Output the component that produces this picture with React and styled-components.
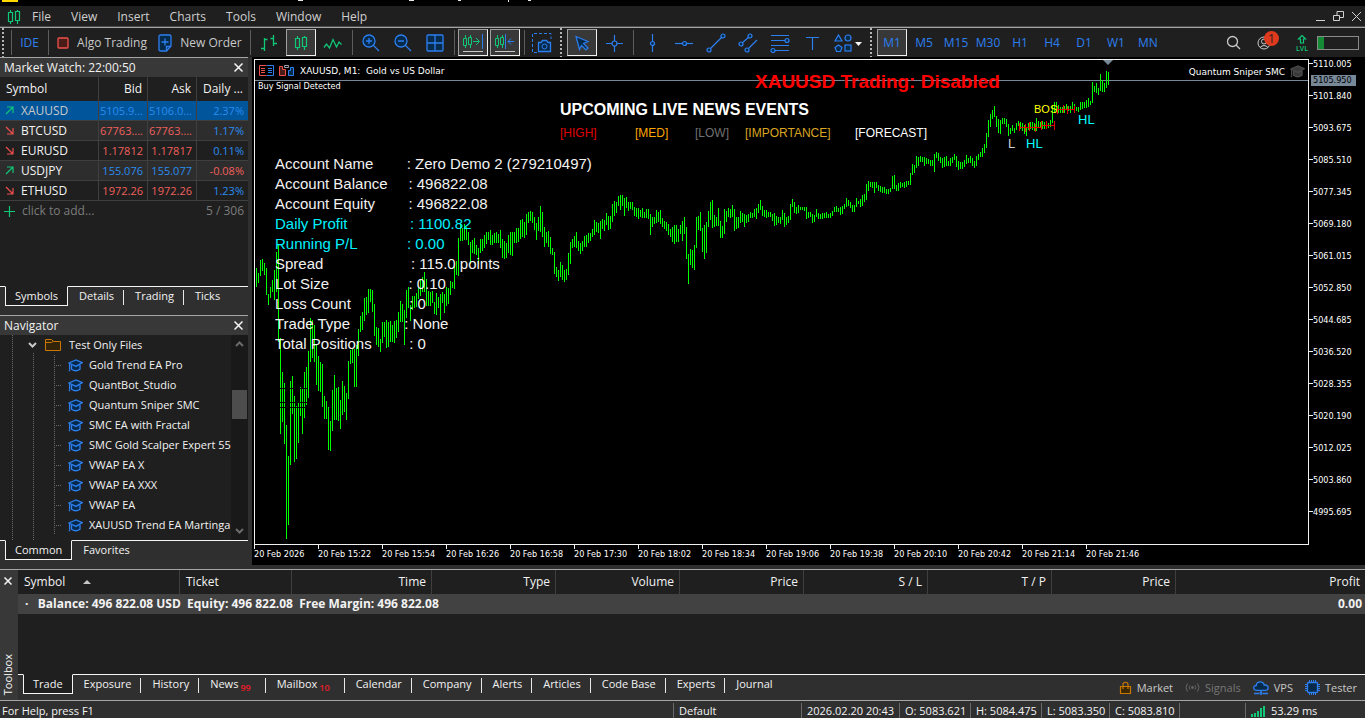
import React from 'react';
import styled, { createGlobalStyle, css } from 'styled-components';

const GlobalStyle = createGlobalStyle`
  * {
    box-sizing: border-box;
  }

  body {
    margin: 0;
    background: #2f2f2f;
    color: #f2f2f2;
    font-family: 'Open Sans', 'Noto Sans', sans-serif;
    font-size: 12px;
    line-height: 16px;
  }

  button {
    font: inherit;
    color: inherit;
    background: none;
    border: 0;
    padding: 0;
    white-space: nowrap;
  }

  svg {
    display: block;
    flex: none;
  }
`;

const BLUE = '#2d7ff0';
const GREEN = '#10c878';
const FILL = '#062a4a';

const bars = `
268-287 273-283 260-276 259-271 263-275 268-295 294-305 287-298 280-292 270-300
252-292 244-342 338-434 372-422 383-444 425-539 456-525 381-465 376-414 396-462
406-459 402-443 387-416 389-434 372-418 367-405 351-398 318-362 320-358 325-362
345-385 356-391 362-392 364-407 396-419 401-419 407-450 421-451 390-431 375-420
388-420 387-421 400-429 381-415 386-412 393-420 361-399 350-364 348-363 349-387
345-387 329-356 316-332 312-330 298-321 297-315 289-313 289-302 290-312 304-336
327-345 328-347 339-352 322-343 322-337 320-348 322-347 321-342 325-342 321-343
320-338 312-332 301-322 304-322 310-345 290-318 287-308 305-321 296-310 296-308
293-307 286-299 279-296 277-292 272-292 279-306 291-306 292-306 291-303 302-314
293-315 297-308 294-320 292-303 294-313 287-306 288-304 281-295 282-288 266-289
261-275 238-276 224-241 228-241 224-240 227-240 232-245 242-264 240-253 238-254
245-255 248-264 239-253 239-251 235-248 232-244 232-240 230-245 235-245 233-243
232-243 234-243 230-248 239-258 241-259 243-258 235-253 232-255 232-256 232-243
228-243 228-242 220-239 219-237 222-238 214-235 212-223 211-221 212-223 217-230
223-240 217-231 206-232 212-237 227-247 232-243 231-247 237-254 248-255 252-274
267-277 270-281 262-277 265-280 270-282 269-280 253-275 242-264 239-248 236-247
232-248 241-251 243-254 241-251 236-247 235-247 233-243 233-241 229-237 220-235
222-232 223-233 221-239 219-229 220-231 213-225 216-230 216-229 204-222 201-216
202-213 196-206 195-210 195-206 198-216 197-208 202-211 202-209 202-210 207-216
208-217 208-219 210-217 208-218 212-218 209-218 209-219 214-235 217-227 217-224
210-223 212-222 210-224 218-227 221-229 222-231 224-235 229-237 227-242 225-244
225-242 229-242 225-234 221-241 217-234 227-259 254-284 249-265 250-268 245-270
217-248 216-230 212-231 228-252 225-259 222-253 211-227 202-220 200-228 215-227
217-226 208-226 221-238 226-238 209-234 211-222 208-217 209-218 205-217 209-231
217-229 217-228 211-223 213-222 214-227 215-223 214-222 212-218 213-218 209-217
208-219 204-213 200-210 206-216 210-217 210-218 212-217 212-217 214-221 213-226
216-225 217-223 217-224 210-220 213-227 217-225 216-223 204-220 199-207 202-213
207-214 205-213 207-210 207-210 207-211 207-219 212-218 212-217 214-223 215-222
209-217 213-219 214-219 213-219 213-218 212-218 214-218 213-218 211-216 207-212
206-212 208-212 207-215 206-214 204-209 198-207 200-206 202-208 205-212 205-212
198-207 201-204 199-207 195-206 194-202 184-200 181-191 182-187 182-188 182-193
182-188 185-191 186-192 187-193 187-193 189-194 189-194 188-192 176-189 175-189
185-191 183-191 182-188 183-187 182-188 181-187 181-185 173-185 164-175 165-173
156-168 157-166 156-162 157-162 157-166 158-164 159-164 160-166 160-166 154-172
152-158 153-161 157-163 158-168 157-167 156-166 161-166 158-166 157-163 154-160
156-167 161-170 162-169 162-169 160-167 155-164 158-163 156-163 158-166 161-168
156-166 154-160 152-157 148-157 144-153 133-148 120-137 114-127 110-119 106-117
116-127 119-133 120-134 118-124 118-124 119-127 124-136 128-134 125-131 128-133
123-130 121-126 122-129 123-131 125-134 127-136 123-130 122-129 122-130 123-131
118-131 121-128 122-128 121-129 122-129 121-128 123-128 120-127 105-123 102-113
102-110 105-113 107-113 107-113 106-113 104-110 106-111 106-113 102-110 104-111
107-111 107-112 102-110 102-109 102-108 100-108 98-107 101-105 82-103 86-92
83-93 88-95 74-91 80-92 83-92 71-88 72-85
`;

const ORIGIN = { x: 255, y: 60 };

const barPath = bars
  .trim()
  .split(/\s+/)
  .map((bar, i) => {
    const [high, low] = bar.split('-').map(Number);
    return `M${1 + i * 2} ${high - ORIGIN.y}h1v${low - high}h-1z`;
  })
  .join('');

const prices = [
  '5110.005', '5101.840', '5093.675', '5085.510', '5077.345', '5069.180', '5061.015', '5052.850',
  '5044.685', '5036.520', '5028.355', '5020.190', '5012.025', '5003.860', '4995.695',
];

const times = [
  '2026', '15:22', '15:54', '16:26', '16:58', '17:30', '18:02', '18:34',
  '19:06', '19:38', '20:10', '20:42', '21:14', '21:46',
];

const quotes = [
  { symbol: 'XAUUSD', bid: '5105.9...', ask: '5106.0...', daily: '2.37%', up: true, tone: 'up', dailyTone: 'up', active: true },
  { symbol: 'BTCUSD', bid: '67763....', ask: '67763....', daily: '1.17%', up: false, tone: 'down', dailyTone: 'up' },
  { symbol: 'EURUSD', bid: '1.17812', ask: '1.17817', daily: '0.11%', up: false, tone: 'down', dailyTone: 'up' },
  { symbol: 'USDJPY', bid: '155.076', ask: '155.077', daily: '-0.08%', up: true, tone: 'up', dailyTone: 'down' },
  { symbol: 'ETHUSD', bid: '1972.26', ask: '1972.26', daily: '1.23%', up: false, tone: 'down', dailyTone: 'up' },
];

const experts = [
  'Gold Trend EA Pro', 'QuantBot_Studio', 'Quantum Sniper SMC', 'SMC EA with Fractal',
  'SMC Gold Scalper Expert 55', 'VWAP EA X', 'VWAP EA XXX', 'VWAP EA', 'XAUUSD Trend EA Martinga',
];

const account = [
  ['Account Name', 8, 'Zero Demo 2 (279210497)'],
  ['Account Balance', 5, '496822.08'],
  ['Account Equity', 8, '496822.08'],
  ['Daily Profit', 15, '1100.82', true],
  ['Running P/L', 12, '0.00', true],
  ['Spread', 21, '115.0 points'],
  ['Lot Size', 19, '0.10'],
  ['Loss Count', 14, '0'],
  ['Trade Type', 13, 'None'],
  ['Total Positions', 9, '0'],
];

const toolboxTabs = [
  { label: 'Trade' }, { label: 'Exposure' }, { label: 'History' }, { label: 'News', count: 99 },
  { label: 'Mailbox', count: 10 }, { label: 'Calendar' }, { label: 'Company' }, { label: 'Alerts' },
  { label: 'Articles' }, { label: 'Code Base' }, { label: 'Experts' }, { label: 'Journal' },
];

/* window */

const Window = styled.div`
  display: flex;
  flex-direction: column;
  min-height: 100vh;
  overflow: hidden;
`;

const TitleStrip = styled.div`
  height: 6px;
  background: #000;
`;

const MenuBar = styled.nav`
  display: flex;
  align-items: center;
  height: 22px;
  padding: 0 4px 0 7px;
  background: #1f1f1f;
  border-bottom: 1px solid #a5a5a5;
  box-shadow: inset 0 -1px #4a4a4a;
  color: #d0d0d0;
`;

const MenuList = styled.div`
  display: flex;
  gap: 20px;
  flex: 1;
  padding-left: 11px;
`;

const WindowButtons = styled.div`
  display: flex;
  gap: 8px;
  align-items: center;
`;

const Toolbar = styled.div`
  display: flex;
  align-items: center;
  gap: 2px;
  height: 29px;
  padding-right: 6px;
  background: #1f1f1f;
`;

const Tool = styled.button`
  display: flex;
  align-items: center;
  justify-content: center;
  gap: 8px;
  width: ${(props) => props.$width || 30}px;
  height: 27px;
  flex: none;
  color: ${(props) => (props.$plain ? '#c8c8c8' : BLUE)};
  ${(props) =>
    props.$pressed &&
    css`
      background: #383838;
      border: 1px solid #f0f0f0;
      border-top-color: #a0a0a0;
      border-left-color: #a0a0a0;
    `}
`;

const Divider = styled.span`
  width: 1px;
  height: 25px;
  margin: 0 1px 0 2px;
  flex: none;
  background: #5c5c5c;
`;

const Grip = styled.span`
  width: 3px;
  height: 29px;
  margin: 0 2px;
  flex: none;
  background: repeating-linear-gradient(#b4b4b4 0 2px, transparent 2px 4px) left / 2px 100% no-repeat;
`;

const ToolbarEnd = styled.div`
  display: flex;
  align-items: center;
  gap: 16px;
  margin-left: auto;
`;

const Battery = styled.span`
  width: 42px;
  height: 14px;
  margin-left: -8px;
  border: 1px solid #8a8a8a;
  background: linear-gradient(90deg, #158a35 6px, transparent 6px);
`;

const Avatar = styled.span`
  position: relative;
  width: 22px;
`;

const Badge = styled.span`
  position: absolute;
  top: -5px;
  left: 7px;
  width: 15px;
  height: 15px;
  border-radius: 50%;
  background: #e03a1e;
  color: #1f1f1f;
  line-height: 15px;
  text-align: center;
`;

const Workspace = styled.div`
  display: flex;
  flex: 1;
`;

const Sidebar = styled.aside`
  display: flex;
  flex-direction: column;
  width: 248px;
  flex: none;
`;

/* panels */

const Panel = styled.section`
  display: flex;
  flex-direction: column;
  border-top: 1px solid #a5a5a5;
  flex: ${(props) => (props.$grow ? 1 : 'none')};
  margin-bottom: 9px;
`;

const PanelHeader = styled.header`
  display: flex;
  align-items: center;
  justify-content: space-between;
  height: 19px;
  padding: 0 5px 0 4px;
  background: #383838;
`;

const PanelBody = styled.div`
  height: ${(props) => props.$height}px;
  background: #1f1f1f;
  overflow: hidden;
`;

const QuoteTable = styled.table`
  width: 100%;
  table-layout: fixed;
  border-collapse: separate;
  border-spacing: 0;

  th,
  td {
    height: 20px;
    padding: 0 4px 0 0;
    border-right: 1px solid #3f3f3f;
    border-bottom: 1px solid #3f3f3f;
    text-align: right;
    font-weight: 400;
    white-space: nowrap;
    overflow: hidden;
  }

  th {
    height: 24px;
    padding-right: 5px;
    border-bottom: 0;
  }

  th:first-child {
    padding-left: 6px;
    text-align: left;
  }

  th:last-child,
  td:last-child {
    border-right: 0;
  }
`;

const QuoteRow = styled.tr`
  background: ${(props) => (props.$active ? '#00559b' : props.$odd ? '#2d2d2d' : '#1f1f1f')};
  color: ${(props) => (props.$active ? '#c8c8c8' : '#f2f2f2')};
`;

const tones = { up: '#2a8cf0', down: '#f0605c' };

const Quote = styled.td`
  color: ${(props) => tones[props.$tone]};
  font-size: 11px;
`;

const SymbolCell = styled.div`
  display: flex;
  align-items: center;
  gap: 7px;
  padding-left: 5px;
`;

const AddRow = styled.div`
  display: flex;
  align-items: center;
  gap: 7px;
  height: 20px;
  padding: 0 4px 0 4px;
  color: #7c7c7c;

  span:last-child {
    margin-left: auto;
  }
`;

const Tabs = styled.div`
  display: flex;
  height: 20px;
`;

const TabSpacer = styled.span`
  width: ${(props) => props.$width || 5}px;
  flex: ${(props) => (props.$grow ? 1 : 'none')};
  border-top: 1px solid #f5f5f5;
`;

const Tab = styled.button`
  display: flex;
  align-items: center;
  height: 20px;
  padding: 0 10px 1px 11px;
  border-top: 1px solid #f5f5f5;
  font-size: 11px;
  ${(props) =>
    props.$active
      ? css`
          padding: 0 9px;
          background: #1f1f1f;
          border: 1px solid #f5f5f5;
          border-top-color: #1f1f1f;
        `
      : css`
          background: ${props.$last ? 'none' : 'linear-gradient(#e8e8e8, #e8e8e8) right 3px / 1px 15px no-repeat'};
        `}
`;

const Count = styled.sub`
  margin: 8px 5px 0 2px;
  color: #ee1c2a;
  font-size: 9px;
  font-weight: 600;
  line-height: 10px;
`;

const Tree = styled.div`
  display: flex;
  flex: 1;
  min-height: 205px;
  background: #1f1f1f;
`;

const TreeGuides = styled.div`
  width: 54px;
  flex: none;
  background:
    repeating-linear-gradient(#6a6a6a 0 1px, transparent 1px 2px) 12px 0 / 1px 100% no-repeat,
    repeating-linear-gradient(#6a6a6a 0 1px, transparent 1px 2px) 33px 18px / 1px 100% no-repeat;
`;

const TreeList = styled.ul`
  flex: 1;
  min-width: 0;
  margin: 0 0 0 -26px;
  padding: 0;
  list-style: none;
  font-size: 11px;
`;

const Folder = styled.li`
  display: flex;
  align-items: center;
  height: 20px;
  gap: 8px;
`;

const TreeItem = styled.li`
  display: flex;
  align-items: center;
  height: 20px;
  gap: 6px;
  margin-left: 26px;
  white-space: nowrap;
  background: repeating-linear-gradient(#6a6a6a 0 1px, transparent 1px 2px) left / 1px 100% no-repeat;

  &::before {
    content: '';
    width: 8px;
    height: 1px;
    flex: none;
    background: repeating-linear-gradient(90deg, #6a6a6a 0 1px, transparent 1px 2px);
  }
`;

const Scrollbar = styled.div`
  display: flex;
  flex-direction: column;
  align-items: center;
  width: 17px;
  padding: 6px 0;
  flex: none;
  background: #191919;
`;

const Thumb = styled.span`
  width: 15px;
  height: 29px;
  margin: 43px 0 auto;
  background: #4d4d4d;
`;

/* chart */

const ChartWindow = styled.main`
  flex: 1;
  min-width: 0;
  display: grid;
  grid-template-columns: 1fr 56px;
  grid-template-rows: 1fr 20px;
  margin: 0 0 4px 4px;
  padding: 2px 0 0 2px;
  background: #000;
  color: #fff;
  font-family: 'DejaVu Sans Condensed', 'DejaVu Sans', sans-serif;
  font-size: 9px;
  line-height: 10px;
  overflow: hidden;
`;

const Plot = styled.div`
  position: relative;
  border: 1px solid #f0f0f0;
  overflow: hidden;
`;

const PlotSvg = styled.svg`
  position: absolute;
  inset: 0;
  width: 100%;
  height: 100%;
`;

const ChartCaption = styled.div`
  position: absolute;
  top: 5px;
  left: 4px;
  display: flex;
  gap: 5px;
  align-items: center;
  font-family: 'DejaVu Sans', sans-serif;
  white-space: pre;
`;

const ExpertCaption = styled(ChartCaption)`
  left: auto;
  right: 3px;
`;

const Label = styled.span`
  position: absolute;
  top: ${(props) => props.$top}px;
  left: ${(props) => props.$left}px;
  color: ${(props) => props.$color || '#fff'};
  font-family: 'Liberation Sans', Arial, sans-serif;
  font-size: ${(props) => props.$size || 12}px;
  font-weight: ${(props) => (props.$bold ? 700 : 400)};
  line-height: 1;
  white-space: nowrap;
`;

const Comment = styled.span`
  position: absolute;
  top: 21px;
  left: 3px;
`;

const AccountInfo = styled.ul`
  position: absolute;
  top: 94px;
  left: 20px;
  margin: 0;
  padding: 0;
  list-style: none;
  font-family: 'Liberation Sans', Arial, sans-serif;
  font-size: 15px;
  line-height: 20px;
  white-space: pre;
`;

const AccountLine = styled.li`
  color: ${(props) => (props.$accent ? '#00f0ff' : '#f2f2f2')};
`;

const PriceAxis = styled.div`
  position: relative;
  display: flex;
  flex-direction: column;
  gap: 22px;

  span::before {
    content: '';
    display: inline-block;
    width: 4px;
    height: 1px;
    vertical-align: 3px;
    background: #f0f0f0;
  }
`;

const PriceTag = styled.b`
  position: absolute;
  top: 16px;
  left: 2px;
  width: 45px;
  height: 11px;
  padding-left: 2px;
  background: #778899;
  color: #000;
  font-weight: 400;
  line-height: 11px;
`;

const TimeAxis = styled.div`
  display: flex;
  overflow: hidden;
  grid-column: 1 / -1;

  span {
    width: 64px;
    flex: none;
    padding-top: 4px;
    background: linear-gradient(#f0f0f0, #f0f0f0) 0 0 / 1px 4px no-repeat;
    white-space: nowrap;
  }
`;

/* toolbox */

const Toolbox = styled.section`
  display: flex;
  height: 131px;
  border-top: 1px solid #a5a5a5;
`;

const Rail = styled.div`
  display: flex;
  flex-direction: column;
  align-items: center;
  justify-content: space-between;
  width: 18px;
  padding: 7px 2px 5px 0;
  background: #383838;

  span {
    writing-mode: vertical-rl;
    transform: rotate(180deg);
    font-size: 11px;
  }
`;

const ToolboxMain = styled.div`
  display: flex;
  flex-direction: column;
  flex: 1;
  min-width: 0;
`;

const TradeArea = styled.div`
  flex: 1;
  background: #1f1f1f;
`;

const TradeTable = styled.table`
  width: 100%;
  table-layout: fixed;
  border-collapse: separate;
  border-spacing: 0;

  th {
    height: 24px;
    padding: 0 5px;
    border-right: 1px solid #3f3f3f;
    text-align: right;
    font-weight: 400;
  }

  th:nth-child(-n + 2) {
    padding-left: 6px;
    text-align: left;
  }

  th:last-child {
    border-right: 0;
  }

  td {
    height: 20px;
    padding: 0 3px 0 7px;
    background: #424242;
    font-weight: 700;
    white-space: pre;
  }

  td:last-child {
    text-align: right;
  }
`;

const SortArrow = styled.i`
  display: inline-block;
  margin-left: 18px;
  border: 4px solid transparent;
  border-top: 0;
  border-bottom-color: #c8c8c8;
  vertical-align: 2px;
`;

const Services = styled.div`
  display: flex;
  align-items: center;
  gap: 12px;
  flex: 1;
  justify-content: flex-end;
  padding-right: 8px;
  border-top: 1px solid #f5f5f5;
`;

const Service = styled.button`
  display: flex;
  align-items: center;
  gap: 5px;
  color: ${(props) => (props.disabled ? '#777' : '#c8c8c8')};
  font-size: 11px;
`;

const ToolboxFooter = styled.div`
  display: flex;
  height: 26px;
`;

const StatusBar = styled.footer`
  display: flex;
  height: 18px;
  border-top: 1px solid #a5a5a5;
  font-size: 11px;
  overflow: hidden;
`;

const StatusCell = styled.span`
  display: flex;
  align-items: center;
  gap: 6px;
  width: ${(props) => props.$width}px;
  flex: ${(props) => (props.$width ? 'none' : 1)};
  margin-top: 2px;
  padding-left: ${(props) => (props.$width ? 5 : 2)}px;
  border-left: ${(props) => (props.$width ? '1px solid #6a6a6a' : '0')};
  white-space: nowrap;
`;

/* icons */

const Icon = ({ w = 20, h = 20, color = BLUE, fill = 'none', children, ...rest }) => (
  <svg width={w} height={h} viewBox={`0 0 ${w} ${h}`} fill={fill} stroke={color} aria-hidden="true" {...rest}>
    {children}
  </svg>
);

const CandlesIcon = ({ color = GREEN }) => (
  <Icon w={14} h={16} color={color} strokeWidth="1.2">
    <path d="M3.5 1v2M3.5 12v3M1.5 3.5h4v9h-4zM10.5 1v2M10.5 12v3M8.5 2.5h4v9h-4z" />
  </Icon>
);

const CloseIcon = ({ size = 9 }) => (
  <Icon w={size} h={size} color="#f5f5f5" strokeWidth="1.5">
    <path d={`M.5 .5L${size - 0.5} ${size - 0.5}M${size - 0.5} .5L.5 ${size - 0.5}`} />
  </Icon>
);

const CapIcon = ({ color = BLUE, fill = FILL }) => (
  <Icon w={15} h={13} color={color} strokeWidth="1.3">
    <path d="M3.5 6v4.2c2.5 1.8 6 1.8 8.5 0V6" fill={fill} />
    <path d="M.8 4L8 1l6.3 2.6L8 7.4z" fill={fill} />
    <path d="M1.6 4.5v6M.8 11.5h1.4" />
  </Icon>
);

const TrendIcon = ({ up }) => (
  <Icon w={9} h={9} color={up ? GREEN : '#f0504c'} strokeWidth="1.2">
    {up ? <path d="M1 8L8 1M2 1h6v6" /> : <path d="M1 1l7 7M2 8h6V2" />}
  </Icon>
);

const ChevronIcon = ({ up, color = '#6a6a6a' }) => (
  <Icon w={9} h={6} color={color} strokeWidth="2">
    <path d={up ? 'M1 5l3.5-3.5L8 5' : 'M1 1l3.5 3.5L8 1'} />
  </Icon>
);

const Magnifier = ({ plus }) => (
  <Icon strokeWidth="1.3">
    <circle cx="8" cy="8" r="6" fill={FILL} />
    <path d={`M12.5 12.5L18 18M5 8h6${plus ? 'M8 5v6' : ''}`} />
  </Icon>
);

const drawTools = [
  { name: 'Vertical line', art: <><path d="M10.5 1v18" /><circle cx="10.5" cy="10.5" r="2" fill={FILL} /></> },
  { name: 'Horizontal line', art: <><path d="M1 10.5h18" /><circle cx="10.5" cy="10.5" r="2" fill={FILL} /></> },
  { name: 'Trend line', art: <><path d="M3 17L17 3" /><circle cx="3" cy="17" r="2" fill={FILL} /><circle cx="17" cy="3" r="2" fill={FILL} /></> },
  { name: 'Channel', art: <><path d="M3 11L12 3M9 17L19 7" /><circle cx="3" cy="11" r="2" fill={FILL} /><circle cx="12" cy="3" r="2" fill={FILL} /><circle cx="9" cy="17" r="2" fill={FILL} /></> },
  { name: 'Fibonacci', art: <><path d="M1 2.5h18M1 7.5h14M1 12.5h18M5 17.5h14" /><circle cx="17" cy="7.5" r="2" fill={FILL} /><circle cx="3" cy="17.5" r="2" fill={FILL} /></> },
  { name: 'Text', art: <path d="M4 4.5h13M10.5 4v13" /> },
];

const services = [
  {
    label: 'Market',
    icon: (
      <Icon w={13} h={14} color="#c87800" strokeWidth="1.2">
        <path d="M1.5 5.5h10v7h-10z" fill="#3c2800" />
        <path d="M4 8V3.5C4 .5 9 .5 9 3.5V8" />
      </Icon>
    ),
  },
  {
    label: 'Signals',
    disabled: true,
    icon: (
      <Icon w={15} h={11} color="#666">
        <circle cx="7.5" cy="5.5" r="1" fill="#666" />
        <path d="M5 3.5q-1.5 2 0 4M10 3.5q1.5 2 0 4M2.5 1.5q-3 4 0 8M12.5 1.5q3 4 0 8" />
      </Icon>
    ),
  },
  {
    label: 'VPS',
    icon: (
      <Icon w={16} h={14} strokeWidth="1.3">
        <path d="M4 9.3C1.5 9.3 .7 8 .7 6.8 .7 5.3 2 4.4 3.3 4.5 3.5 2 5.3 .8 7.3 .8c2 0 3.5 1.2 3.8 3.2C13.5 3.8 15.2 5 15.2 6.8c0 1.5-1.2 2.5-2.7 2.5z" fill={FILL} />
        <path d="M8 9v3M1 12.5h5M10 12.5h5" />
        <circle cx="8" cy="12.3" r="1" />
      </Icon>
    ),
  },
  {
    label: 'Tester',
    icon: (
      <Icon w={15} h={15}>
        <path d="M4.5 0v15M6.5 0v15M8.5 0v15M10.5 0v15M0 4.5h15M0 6.5h15M0 8.5h15M0 10.5h15" />
        <rect x="2.5" y="2.5" width="10" height="10" rx="1" fill={FILL} strokeWidth="1.3" />
      </Icon>
    ),
  },
];

const MainToolbar = () => (
  <Toolbar>
    <Grip />
    <Divider />
    <Tool $width={29}>IDE</Tool>
    <Divider />
    <Tool $width={100} $plain>
      <Icon w={12} h={12} color="#f0504c" strokeWidth="1.3">
        <rect x="1" y="1" width="10" height="10" rx="1" fill="#4a1c18" />
      </Icon>
      Algo Trading
    </Tool>
    <Tool $width={92} $plain>
      <Icon w={14} h={18} strokeWidth="1.3">
        <path d="M2.5 1h9q1.5 0 1.5 1.5V12l-4.5 5h-6Q1 17 1 15.5v-13Q1 1 2.5 1z" fill={FILL} />
        <path d="M7 4.5v7M3.5 8h7M8.5 17v-4.5H13" />
      </Icon>
      New Order
    </Tool>
    <Divider />
    <Tool aria-label="Bars">
      <Icon color={GREEN} strokeWidth="1.3">
        <path d="M5.5 5v13M2 15.5h3.5M5.5 6.5h3M14.5 2v11M11.5 5.5h3M14.5 10.5H18" />
      </Icon>
    </Tool>
    <Tool $pressed aria-label="Candles"><CandlesIcon /></Tool>
    <Tool aria-label="Line">
      <Icon color={GREEN} strokeWidth="1.3">
        <path d="M1 14.5L3.5 11l3 4 3.5-8.5 3.5 7.5 2.5-5 2.5 2.5" />
      </Icon>
    </Tool>
    <Divider />
    <Tool aria-label="Zoom in"><Magnifier plus /></Tool>
    <Tool aria-label="Zoom out"><Magnifier /></Tool>
    <Tool aria-label="Tile windows">
      <Icon strokeWidth="1.3">
        <rect x="2" y="2" width="16" height="16" rx="1" fill={FILL} />
        <path d="M10 2v16M2 10h16" />
      </Icon>
    </Tool>
    <Divider />
    <Tool $pressed aria-label="Auto scroll">
      <Icon w={22} h={20}>
        <g stroke={GREEN}>
          <path d="M3.5 2v3M3.5 12v3M1.5 5.5h3v7h-3zM8.5 2v3M8.5 12v3M6.5 4.5h3v7h-3zM11 8.5h6M14 5l3.5 3.5L14 12" />
        </g>
        <path d="M20.5 1v15" />
        <path d="M1 18.5h20" stroke="#c8c8c8" />
      </Icon>
    </Tool>
    <Tool $pressed aria-label="Chart shift">
      <Icon w={22} h={20}>
        <path d="M3.5 2v3M3.5 12v3M1.5 5.5h3v7h-3zM8.5 2v3M8.5 12v3M6.5 4.5h3v7h-3z" stroke={GREEN} />
        <path d="M11.5 1v15M14 8.5h6M17 5.5l-3 3 3 3" />
        <path d="M1 18.5h20" stroke="#c8c8c8" />
      </Icon>
    </Tool>
    <Divider />
    <Tool $width={28} aria-label="Screenshot">
      <Icon>
        <path d="M5 19.5H.5V.5h18.5V6" strokeDasharray="3 2" />
        <path d="M6.5 9.5h2.500l1.500-2h4l1.500 2h2.500v9h-12z" fill={FILL} strokeWidth="1.3" />
        <circle cx="12.5" cy="13.5" r="2.5" />
      </Icon>
    </Tool>
    <Grip />
    <Tool $pressed aria-label="Cursor">
      <Icon>
        <path d="M4 3.5l12 5-4.5 2L16 15l-2 2-4.5-4.5-2 4z" fill={FILL} strokeWidth="1.2" />
      </Icon>
    </Tool>
    <Tool aria-label="Crosshair">
      <Icon strokeWidth="1.2">
        <path d="M10.5 2v17M2 10.5h17" />
        <circle cx="10.5" cy="10.5" r="2.5" fill="#1f1f1f" />
      </Icon>
    </Tool>
    <Divider />
    {drawTools.map((tool) => (
      <Tool key={tool.name} aria-label={tool.name}>
        <Icon strokeWidth="1.2">{tool.art}</Icon>
      </Tool>
    ))}
    <Tool $width={37} aria-label="Objects">
      <Icon w={30} strokeWidth="1.2">
        <path d="M5.5 2L9 8H2z" fill={FILL} />
        <circle cx="15" cy="5" r="3" fill={FILL} />
        <path d="M5.5 12L9 14.5 7.5 18.5h-4L2 14.5z" fill={FILL} />
        <rect x="12" y="12" width="6" height="6" fill={FILL} />
        <path d="M22 9h7l-3.5 4z" fill="#f5f5f5" stroke="none" />
      </Icon>
    </Tool>
    <Grip />
    {['M1', 'M5', 'M15', 'M30', 'H1', 'H4', 'D1', 'W1', 'MN'].map((frame) => (
      <Tool key={frame} $pressed={frame === 'M1'}>{frame}</Tool>
    ))}
    <ToolbarEnd>
      <Icon w={15} h={15} color="#c8c8c8" strokeWidth="1.3">
        <circle cx="6.5" cy="6.5" r="5" />
        <path d="M10 10l4 4" />
      </Icon>
      <Avatar>
        <Icon w={14} h={14} color="#c8c8c8">
          <circle cx="7" cy="7" r="6" />
          <circle cx="7" cy="5.5" r="2.5" />
          <path d="M3 11.5q4-4 8 0" />
        </Icon>
        <Badge>1</Badge>
      </Avatar>
      <Icon w={14} h={18} color={GREEN}>
        <path d="M7 1.5L10.5 5H8.500v4h-3V5h-2z" strokeWidth="1.2" />
        <text x="7" y="17" fill={GREEN} stroke="none" fontSize="7" fontWeight="600" textAnchor="middle">LVL</text>
      </Icon>
      <Battery />
    </ToolbarEnd>
  </Toolbar>
);

const MarketWatch = () => (
  <Panel>
    <PanelHeader>
      Market Watch: 22:00:50
      <button aria-label="Close market watch"><CloseIcon /></button>
    </PanelHeader>
    <PanelBody $height={209}>
      <QuoteTable>
        <colgroup>
          <col width="99" />
          <col width="49" />
          <col width="49" />
          <col />
        </colgroup>
        <thead>
          <tr>
            <th>Symbol</th>
            <th>Bid</th>
            <th>Ask</th>
            <th>Daily ...</th>
          </tr>
        </thead>
        <tbody>
          {quotes.map((q, i) => (
            <QuoteRow key={q.symbol} $active={q.active} $odd={i % 2 === 1}>
              <td>
                <SymbolCell><TrendIcon up={q.up} />{q.symbol}</SymbolCell>
              </td>
              <Quote $tone={q.tone}>{q.bid}</Quote>
              <Quote $tone={q.tone}>{q.ask}</Quote>
              <Quote $tone={q.dailyTone}>{q.daily}</Quote>
            </QuoteRow>
          ))}
        </tbody>
      </QuoteTable>
      <AddRow>
        <Icon w={11} h={11} color={GREEN} strokeWidth="1.2"><path d="M5.5 0v11M0 5.5h11" /></Icon>
        <span>click to add...</span>
        <span>5 / 306</span>
      </AddRow>
    </PanelBody>
    <Tabs>
      <TabSpacer />
      <Tab $active>Symbols</Tab>
      <Tab>Details</Tab>
      <Tab>Trading</Tab>
      <Tab $last>Ticks</Tab>
      <TabSpacer $grow />
    </Tabs>
  </Panel>
);

const Navigator = () => (
  <Panel $grow>
    <PanelHeader>
      Navigator
      <button aria-label="Close navigator"><CloseIcon /></button>
    </PanelHeader>
    <Tree>
      <TreeGuides />
      <TreeList>
        <Folder>
          <ChevronIcon color="#c8c8c8" />
          <Icon w={16} h={14} color="#c87800">
            <path d="M.5 1.5h6l2 2h7v9h-15z" fill="#33240a" />
            <path d="M.5 4.5h6l2-1.5" />
          </Icon>
          Test Only Files
        </Folder>
        {experts.map((name) => (
          <TreeItem key={name}><CapIcon />{name}</TreeItem>
        ))}
      </TreeList>
      <Scrollbar>
        <ChevronIcon up />
        <Thumb />
        <ChevronIcon />
      </Scrollbar>
    </Tree>
    <Tabs>
      <TabSpacer />
      <Tab $active>Common</Tab>
      <Tab $last>Favorites</Tab>
      <TabSpacer $grow />
    </Tabs>
  </Panel>
);

const Chart = () => (
  <ChartWindow>
    <Plot>
      <PlotSvg>
        <path d="M0 20.5H4000" stroke="#778899" />
        <path d={barPath} fill="#00ff00" />
        <path d="M25 328h28v1H25zM25 342h28v1H25zM25 347h28v1H25z" fill="#000" />
        <path
          d="M764 67.5h10M774 67.5h12M786 65.5h14M764.5 63v8M770.5 64v8M774.5 62v9M780.5 64v8M786.5 61v9M791.5 61v8M799.5 61v9M802 49.5h18M802.5 46v8M808.5 45v8M812.5 46v8M819.5 46v7"
          stroke="#e00000"
        />
        <path d="M848 0h10l-5 5z" fill="#778899" />
      </PlotSvg>
      <ChartCaption>
        <Icon w={15} h={12} color={BLUE}>
          <path d="M7.5 .5h7v10h-7M9 3.5h4M9 5.5h4M9 7.5h4" />
          <path d="M7.5 .5h-7v10h7M2 3.5h4M2 5.5h4M2 7.5h4" stroke="#f0504c" />
        </Icon>
        <Icon w={16} h={12} color={BLUE}>
          <path d="M9.5 10.5v-5h2v-3h3v8z" fill={FILL} />
          <path d="M.5 1.5h3v3h3v6h-6z" stroke="#f0504c" fill="#4a1c18" />
          <path d="M5.5 .5h4v2h-4z" stroke="#a0a0a0" />
        </Icon>
        <span>XAUUSD, M1:  Gold vs US Dollar</span>
      </ChartCaption>
      <Comment>Buy Signal Detected</Comment>
      <ExpertCaption>
        Quantum Sniper SMC
        <CapIcon color="#4a4a4a" fill="#3a3a3a" />
      </ExpertCaption>
      <Label $top={12} $left={500} $size={19} $bold $color="#ff0000">XAUUSD Trading: Disabled</Label>
      <Label $top={42} $left={305} $size={16} $bold>UPCOMING LIVE NEWS EVENTS</Label>
      <Label $top={67} $left={305} $color="#e00000">[HIGH]</Label>
      <Label $top={67} $left={380} $color="#ffa500">[MED]</Label>
      <Label $top={67} $left={440} $color="#707070">[LOW]</Label>
      <Label $top={67} $left={490} $color="#daa520">[IMPORTANCE]</Label>
      <Label $top={67} $left={600}>[FORECAST]</Label>
      <Label $top={44} $left={779} $size={11} $color="#ffff00">BOS</Label>
      <Label $top={77} $left={753} $size={13} $color="#d3d3d3">L</Label>
      <Label $top={77} $left={771} $size={13} $color="#00ffff">HL</Label>
      <Label $top={53} $left={823} $size={13} $color="#00ffff">HL</Label>
      <AccountInfo>
        {account.map(([name, pad, value, accent]) => (
          <AccountLine key={name} $accent={accent}>
            {name + ' '.repeat(pad) + ': ' + value}
          </AccountLine>
        ))}
      </AccountInfo>
    </Plot>
    <PriceAxis>
      {prices.map((price) => <span key={price}>{price}</span>)}
      <PriceTag>5105.950</PriceTag>
    </PriceAxis>
    <TimeAxis>
      {times.map((time) => <span key={time}>20 Feb {time}</span>)}
    </TimeAxis>
  </ChartWindow>
);

const TradePanel = () => (
  <Toolbox>
    <Rail>
      <button aria-label="Close toolbox"><CloseIcon size={8} /></button>
      <span>Toolbox</span>
    </Rail>
    <ToolboxMain>
      <TradeArea>
        <TradeTable>
          <colgroup>
            <col width="162" />
            <col width="112" />
            <col width="140" />
            <col width="124" />
            <col width="124" />
            <col width="124" />
            <col width="124" />
            <col width="124" />
            <col width="124" />
            <col />
          </colgroup>
          <thead>
            <tr>
              <th>Symbol<SortArrow /></th>
              {['Ticket', 'Time', 'Type', 'Volume', 'Price', 'S / L', 'T / P'].map((name) => (
                <th key={name}>{name}</th>
              ))}
              <th>Price</th>
              <th>Profit</th>
            </tr>
          </thead>
          <tbody>
            <tr>
              <td colSpan="9">{'·   Balance: 496 822.08 USD  Equity: 496 822.08  Free Margin: 496 822.08'}</td>
              <td>0.00</td>
            </tr>
          </tbody>
        </TradeTable>
      </TradeArea>
      <ToolboxFooter>
        <TabSpacer />
        {toolboxTabs.map(({ label, count }, i) => (
          <Tab key={label} $active={i === 0} $last={label === 'Journal'}>
            {label}
            {count && <Count>{count}</Count>}
          </Tab>
        ))}
        <Services>
          {services.map(({ label, icon, disabled }) => (
            <Service key={label} disabled={disabled}>{icon}{label}</Service>
          ))}
        </Services>
      </ToolboxFooter>
    </ToolboxMain>
  </Toolbox>
);

export default function App() {
  return (
    <Window>
      <GlobalStyle />
      <TitleStrip>
        <svg width="560" height="6">
          <path d="M2 0h16v2H2z" fill="#ffd800" />
          <path d="M298 .5h5M409 .5h5M458 .5h3M508.5 0v2M528 .5h3" stroke="#e8e8e8" />
        </svg>
      </TitleStrip>
      <MenuBar>
        <CandlesIcon />
        <MenuList>
          {['File', 'View', 'Insert', 'Charts', 'Tools', 'Window', 'Help'].map((item) => (
            <button key={item}>{item}</button>
          ))}
        </MenuList>
        <WindowButtons>
          <button aria-label="Minimize"><Icon w={9} h={10} color="#d0d0d0"><path d="M0 8.5h9" /></Icon></button>
          <button aria-label="Restore">
            <Icon w={11} h={11} color="#d0d0d0"><path d="M4 4V.5h6.5v6H7M.5 4.5h6v5h-6z" /></Icon>
          </button>
          <button aria-label="Close"><Icon w={9} h={9} color="#d0d0d0"><path d="M0 0l9 9M9 0L0 9" /></Icon></button>
        </WindowButtons>
      </MenuBar>
      <MainToolbar />
      <Workspace>
        <Sidebar>
          <MarketWatch />
          <Navigator />
        </Sidebar>
        <Chart />
      </Workspace>
      <TradePanel />
      <StatusBar>
        <StatusCell>For Help, press F1</StatusCell>
        <StatusCell $width={128}>Default</StatusCell>
        <StatusCell $width={98}>2026.02.20 20:43</StatusCell>
        <StatusCell $width={71}>O: 5083.621</StatusCell>
        <StatusCell $width={71}>H: 5084.475</StatusCell>
        <StatusCell $width={68}>L: 5083.350</StatusCell>
        <StatusCell $width={70}>C: 5083.810</StatusCell>
        <StatusCell $width={66} />
        <StatusCell $width={120}>
          <Icon w={14} h={12} color={GREEN} strokeWidth="2">
            <path d="M1 9v3M4 8v4M7 6v6M10 3v9M13 1v11" />
          </Icon>
          53.29 ms
        </StatusCell>
      </StatusBar>
    </Window>
  );
}
